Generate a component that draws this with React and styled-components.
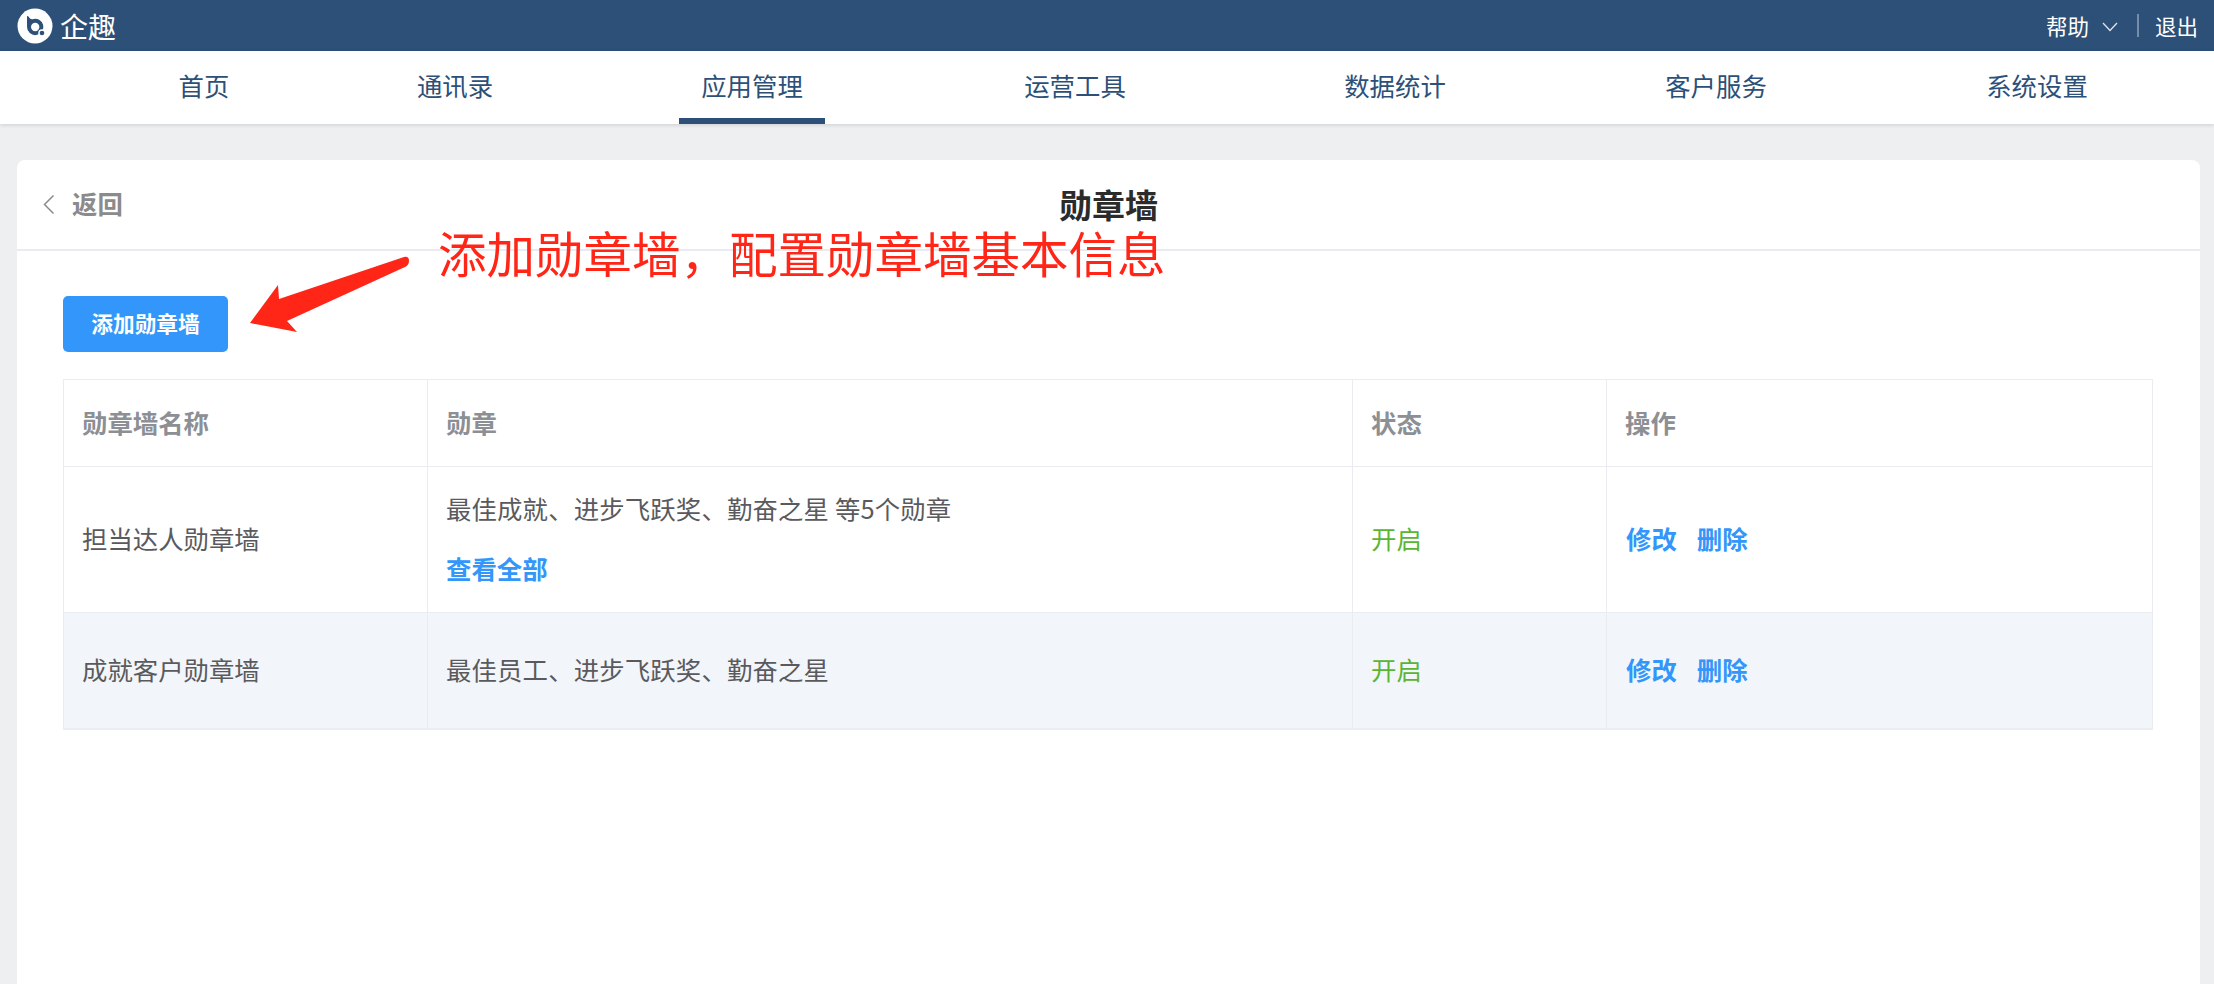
import React from 'react'
import styled, {createGlobalStyle} from 'styled-components'

const FONT = `'PingFang SC', 'Noto Sans CJK SC', 'Liberation Sans', sans-serif`

const GlobalStyle = createGlobalStyle`
  html, body {
    margin: 0;
    height: 100%;
    overflow: hidden;
    background: #edeff1;
    font-family: ${FONT};
  }
`

const Page = styled.div`
  height: 984px;
  display: flex;
  flex-direction: column;
  background: #edeff1;
`

const TopBar = styled.header`
  flex: 0 0 51px;
  display: flex;
  align-items: center;
  justify-content: space-between;
  padding: 0 16px 0 17px;
  background: #2c5078;
  color: #fff;
`

const Brand = styled.div`
  display: flex;
  align-items: center;
  gap: 7px;
  font-size: 28px;
  line-height: 1;
`

const TopActions = styled.div`
  display: flex;
  align-items: center;
  font-size: 21.5px;
  line-height: 1;
`

const ActionChevron = styled.svg`
  margin: 2px 0 0 13px;
`

const Separator = styled.span`
  width: 2px;
  height: 23px;
  margin: 0 16px 0 19px;
  background: rgba(255, 255, 255, 0.35);
`

const Nav = styled.nav`
  flex: 0 0 73px;
  display: grid;
  grid-template-columns: 250px 252px 342px 304px 336px 306px 336px;
  padding-left: 79px;
  background: #fff;
  box-shadow: 0 1px 4px rgba(0, 0, 0, 0.14);
  position: relative;
`

const NavCell = styled.div`
  display: flex;
  justify-content: center;
`

const NavLink = styled.a`
  display: flex;
  align-items: center;
  height: 73px;
  box-sizing: border-box;
  padding: 0 22px;
  font-size: 25.4px;
  color: #2c5078;
  border-bottom: 6px solid ${props => (props.$active ? '#2c5078' : 'transparent')};
`

const Card = styled.main`
  flex: 1;
  margin: 36px 14px 0 17px;
  background: #fff;
  border-radius: 8px 8px 0 0;
  position: relative;
`

const CardHeader = styled.div`
  height: 89px;
  position: relative;
  display: flex;
  align-items: center;
  justify-content: center;
  border-bottom: 2px solid #e8ecf2;
`

const BackLink = styled.a`
  position: absolute;
  left: 26px;
  top: 0;
  height: 89px;
  display: flex;
  align-items: center;
  gap: 17px;
  font-size: 25.4px;
  font-weight: 700;
  color: #8b8b8b;
  span {
    padding-bottom: 4px;
  }
`

const Title = styled.h1`
  margin: 0;
  padding-bottom: 2px;
  font-size: 33px;
  line-height: 38px;
  font-weight: 700;
  color: #2b2b2b;
`

const CardBody = styled.div`
  padding: 45px 48px 0 46px;
`

const PrimaryButton = styled.button`
  display: block;
  width: 165px;
  height: 56px;
  padding: 0 0 4px;
  border: 0;
  border-radius: 5px;
  background: #3296fa;
  color: #fff;
  font-family: ${FONT};
  font-size: 21.7px;
  font-weight: 700;
`

const Table = styled.table`
  width: 2089px;
  margin-top: 27px;
  border-collapse: collapse;
  table-layout: fixed;
  font-size: 25.4px;
  color: #5a5a5e;

  th, td {
    box-sizing: border-box;
    padding: 0 18px 3px;
    border: 1px solid #e9edf2;
    text-align: left;
  }
  th {
    height: 87px;
    font-weight: 700;
    color: #8c8f94;
  }
  td:last-child {
    padding-left: 19px;
  }
  tbody tr:last-child td {
    border-bottom-width: 2px;
  }
`

const Row = styled.tr`
  height: ${props => props.$height}px;
  background: ${props => (props.$striped ? '#f2f5f9' : '#fff')};
`

const BadgeLine = styled.div`
  line-height: 36px;
  letter-spacing: 0.15px;
`

const TextLink = styled.a`
  color: #3296fa;
  font-weight: 700;
  & + & {
    margin-left: 20px;
  }
`

const ViewAll = styled(BadgeLine)`
  margin-top: 24px;
  letter-spacing: 0;
`

const Status = styled.span`
  color: #5ab534;
`

const Callout = styled.div`
  position: absolute;
  left: 421px;
  top: 67px;
  font-size: 48.5px;
  line-height: 50px;
  color: #ff2618;
  white-space: nowrap;
`

const ArrowMark = styled.svg`
  position: absolute;
  left: 0;
  top: 0;
  pointer-events: none;
`

const Logo = () => (
  <svg width="36" height="36" viewBox="0 0 36 36">
    <circle cx="18" cy="18" r="17.5" fill="#fff" />
    <path d="M10 8 L10 19 A8.2 8.2 0 1 0 15.5 11.2 C13.5 11.4 12.5 10 11.5 8.5 Z" fill="#2c5078" />
    <circle cx="18.2" cy="19" r="4.2" fill="#fff" />
    <circle cx="25" cy="25" r="3.8" fill="#fff" />
    <circle cx="25" cy="25" r="2.3" fill="#2c5078" />
  </svg>
)

const Chevron = () => (
  <ActionChevron width="16" height="10" viewBox="0 0 16 10">
    <path d="M1 1 L8 8.5 L15 1" fill="none" stroke="#fff" strokeOpacity="0.85" strokeWidth="1.3" />
  </ActionChevron>
)

const BackChevron = () => (
  <svg width="12" height="21" viewBox="0 0 12 21">
    <path d="M10.5 1.5 L1.5 10.5 L10.5 19.5" fill="none" stroke="#8b8b8b" strokeWidth="1.5" />
  </svg>
)

const navItems = ['首页', '通讯录', '应用管理', '运营工具', '数据统计', '客户服务', '系统设置']

const walls = [
  {name: '担当达人勋章墙', badges: '最佳成就、进步飞跃奖、勤奋之星 等5个勋章', more: true, height: 146},
  {name: '成就客户勋章墙', badges: '最佳员工、进步飞跃奖、勤奋之星', more: false, height: 116}
]

const App = () => (
  <React.Fragment>
    <GlobalStyle />
    <Page>
      <TopBar>
        <Brand>
          <Logo />
          <span>企趣</span>
        </Brand>
        <TopActions>
          <span>帮助</span>
          <Chevron />
          <Separator />
          <span>退出</span>
        </TopActions>
      </TopBar>
      <Nav>
        {navItems.map(item => (
          <NavCell key={item}>
            <NavLink $active={item === '应用管理'}>{item}</NavLink>
          </NavCell>
        ))}
      </Nav>
      <Card>
        <CardHeader>
          <BackLink>
            <BackChevron />
            <span>返回</span>
          </BackLink>
          <Title>勋章墙</Title>
        </CardHeader>
        <CardBody>
          <PrimaryButton>添加勋章墙</PrimaryButton>
          <Table>
            <colgroup>
              <col style={{width: 364}} />
              <col style={{width: 925}} />
              <col style={{width: 254}} />
              <col style={{width: 546}} />
            </colgroup>
            <thead>
              <tr>
                <th>勋章墙名称</th>
                <th>勋章</th>
                <th>状态</th>
                <th>操作</th>
              </tr>
            </thead>
            <tbody>
              {walls.map((wall, idx) => (
                <Row key={wall.name} $height={wall.height} $striped={idx % 2 === 1}>
                  <td>{wall.name}</td>
                  <td>
                    <BadgeLine>{wall.badges}</BadgeLine>
                    {wall.more && (
                      <ViewAll>
                        <TextLink>查看全部</TextLink>
                      </ViewAll>
                    )}
                  </td>
                  <td>
                    <Status>开启</Status>
                  </td>
                  <td>
                    <TextLink>修改</TextLink>
                    <TextLink>删除</TextLink>
                  </td>
                </Row>
              ))}
            </tbody>
          </Table>
        </CardBody>
        <ArrowMark width="420" height="200">
          <path
            d="M233 163 L261 125 L262 139 L387 97 Q392 96 392 101 Q392 105 388 107 L270 161 L280 172 Z"
            fill="#ff2618"
          />
        </ArrowMark>
        <Callout>添加勋章墙，配置勋章墙基本信息</Callout>
      </Card>
    </Page>
  </React.Fragment>
)

export default App
